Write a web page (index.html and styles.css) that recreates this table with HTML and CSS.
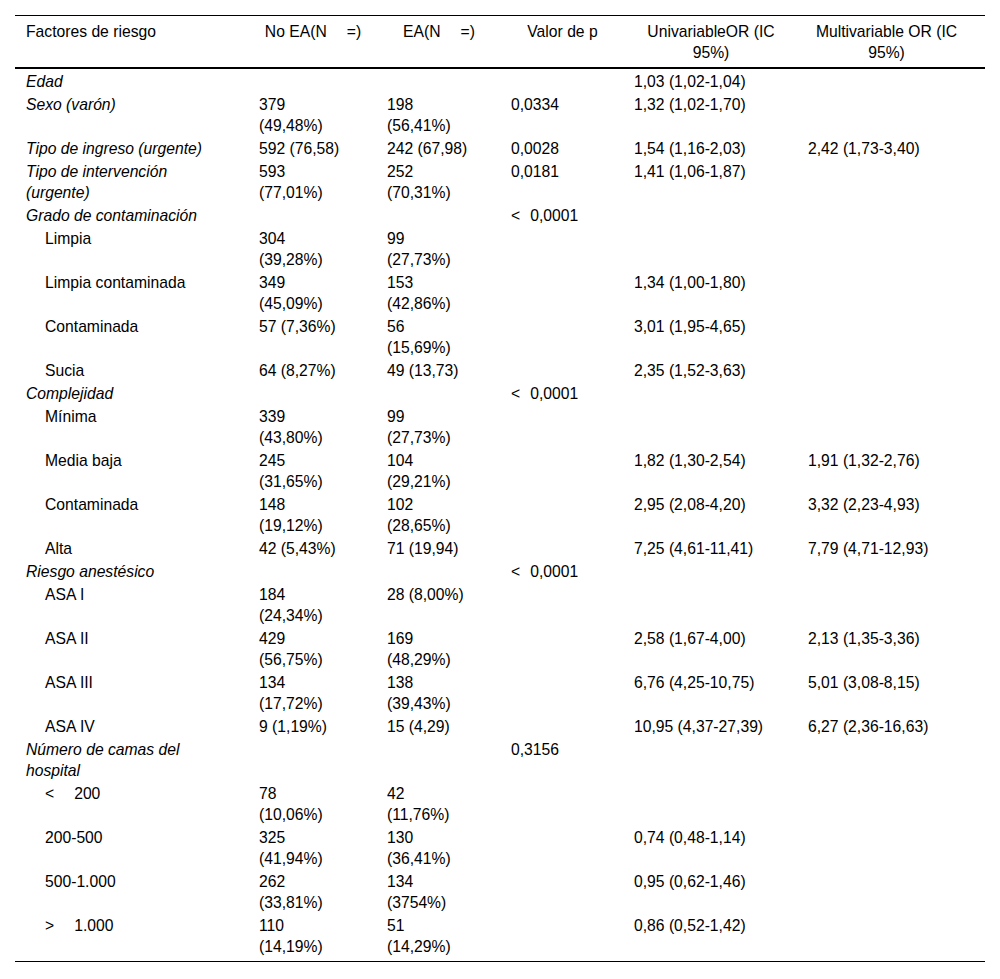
FILE: index.html
```html
<!DOCTYPE html>
<html lang="es">
<head>
<meta charset="utf-8">
<title>Factores de riesgo</title>
<link rel="stylesheet" href="styles.css">
</head>
<body>
<table class="risk">
  <colgroup>
    <col class="c1"><col class="c2"><col class="c3"><col class="c4"><col class="c5"><col class="c6">
  </colgroup>
  <thead>
    <tr>
      <th class="first">Factores de riesgo</th>
      <th>No EA(N<span class="gap-l"></span>=)</th>
      <th>EA(N<span class="gap-l"></span>=)</th>
      <th>Valor de p</th>
      <th>UnivariableOR (IC 95%)</th>
      <th>Multivariable OR (IC 95%)</th>
    </tr>
  </thead>
  <tbody>
    <tr><td class="cat">Edad</td><td></td><td></td><td></td><td>1,03 (1,02-1,04)</td><td></td></tr>
    <tr><td class="cat">Sexo (varón)</td><td>379 (49,48%)</td><td>198 (56,41%)</td><td>0,0334</td><td>1,32 (1,02-1,70)</td><td></td></tr>
    <tr><td class="cat">Tipo de ingreso (urgente)</td><td>592 (76,58)</td><td>242 (67,98)</td><td>0,0028</td><td>1,54 (1,16-2,03)</td><td>2,42 (1,73-3,40)</td></tr>
    <tr><td class="cat">Tipo de intervención (urgente)</td><td>593 (77,01%)</td><td>252 (70,31%)</td><td>0,0181</td><td>1,41 (1,06-1,87)</td><td></td></tr>
    <tr><td class="cat">Grado de contaminación</td><td></td><td></td><td>&lt;<span class="gap-s"></span>0,0001</td><td></td><td></td></tr>
    <tr><td class="sub">Limpia</td><td>304 (39,28%)</td><td>99 (27,73%)</td><td></td><td></td><td></td></tr>
    <tr><td class="sub">Limpia contaminada</td><td>349 (45,09%)</td><td>153 (42,86%)</td><td></td><td>1,34 (1,00-1,80)</td><td></td></tr>
    <tr><td class="sub">Contaminada</td><td>57 (7,36%)</td><td>56 (15,69%)</td><td></td><td>3,01 (1,95-4,65)</td><td></td></tr>
    <tr><td class="sub">Sucia</td><td>64 (8,27%)</td><td>49 (13,73)</td><td></td><td>2,35 (1,52-3,63)</td><td></td></tr>
    <tr><td class="cat">Complejidad</td><td></td><td></td><td>&lt;<span class="gap-s"></span>0,0001</td><td></td><td></td></tr>
    <tr><td class="sub">Mínima</td><td>339 (43,80%)</td><td>99 (27,73%)</td><td></td><td></td><td></td></tr>
    <tr><td class="sub">Media baja</td><td>245 (31,65%)</td><td>104 (29,21%)</td><td></td><td>1,82 (1,30-2,54)</td><td>1,91 (1,32-2,76)</td></tr>
    <tr><td class="sub">Contaminada</td><td>148 (19,12%)</td><td>102 (28,65%)</td><td></td><td>2,95 (2,08-4,20)</td><td>3,32 (2,23-4,93)</td></tr>
    <tr><td class="sub">Alta</td><td>42 (5,43%)</td><td>71 (19,94)</td><td></td><td>7,25 (4,61-11,41)</td><td>7,79 (4,71-12,93)</td></tr>
    <tr><td class="cat">Riesgo anestésico</td><td></td><td></td><td>&lt;<span class="gap-s"></span>0,0001</td><td></td><td></td></tr>
    <tr><td class="sub">ASA I</td><td>184 (24,34%)</td><td>28 (8,00%)</td><td></td><td></td><td></td></tr>
    <tr><td class="sub">ASA II</td><td>429 (56,75%)</td><td>169 (48,29%)</td><td></td><td>2,58 (1,67-4,00)</td><td>2,13 (1,35-3,36)</td></tr>
    <tr><td class="sub">ASA III</td><td>134 (17,72%)</td><td>138 (39,43%)</td><td></td><td>6,76 (4,25-10,75)</td><td>5,01 (3,08-8,15)</td></tr>
    <tr><td class="sub">ASA IV</td><td>9 (1,19%)</td><td>15 (4,29)</td><td></td><td>10,95 (4,37-27,39)</td><td>6,27 (2,36-16,63)</td></tr>
    <tr><td class="cat">Número de camas del hospital</td><td></td><td></td><td>0,3156</td><td></td><td></td></tr>
    <tr><td class="sub">&lt;<span class="gap-l"></span>200</td><td>78 (10,06%)</td><td>42 (11,76%)</td><td></td><td></td><td></td></tr>
    <tr><td class="sub">200-500</td><td>325 (41,94%)</td><td>130 (36,41%)</td><td></td><td>0,74 (0,48-1,14)</td><td></td></tr>
    <tr><td class="sub">500-1.000</td><td>262 (33,81%)</td><td>134 (3754%)</td><td></td><td>0,95 (0,62-1,46)</td><td></td></tr>
    <tr class="last"><td class="sub">&gt;<span class="gap-l"></span>1.000</td><td>110 (14,19%)</td><td>51 (14,29%)</td><td></td><td>0,86 (0,52-1,42)</td><td></td></tr>
  </tbody>
</table>
</body>
</html>
```

FILE: styles.css
```css
html, body {
  margin: 0;
  padding: 0;
  background: #fff;
}

body {
  padding: 15px;
  font-family: "Liberation Sans", Arial, sans-serif;
  font-size: 15.7px;
  line-height: 21px;
  color: #000;
}

.risk {
  width: 970px;
  table-layout: fixed;
  border-collapse: collapse;
  border-top: 1px solid #000;
  border-bottom: 1px solid #000;
}

.c1 { width: 244px; }
.c2 { width: 128px; }
.c3 { width: 124px; }
.c4 { width: 123px; }
.c5 { width: 174px; }
.c6 { width: 177px; }

.risk th {
  font-weight: normal;
  text-align: center;
  vertical-align: top;
  padding: 5px 20px 4px 0;
  border-bottom: 2px solid #000;
}

.risk th.first {
  text-align: left;
  padding-left: 11px;
}

.risk td {
  vertical-align: top;
  text-align: left;
  padding: 2px 40px 0 0;
}

.risk td:nth-child(2) {
  padding-right: 45px;
}

.risk td:nth-child(3) {
  padding-right: 41px;
}

.risk td.cat {
  font-style: italic;
  padding-left: 11px;
}

.risk td.sub {
  padding-left: 30px;
}

.risk tr.last td {
  padding-bottom: 4px;
}

.gap-l {
  display: inline-block;
  width: 20px;
}

.gap-s {
  display: inline-block;
  width: 10px;
}
```
